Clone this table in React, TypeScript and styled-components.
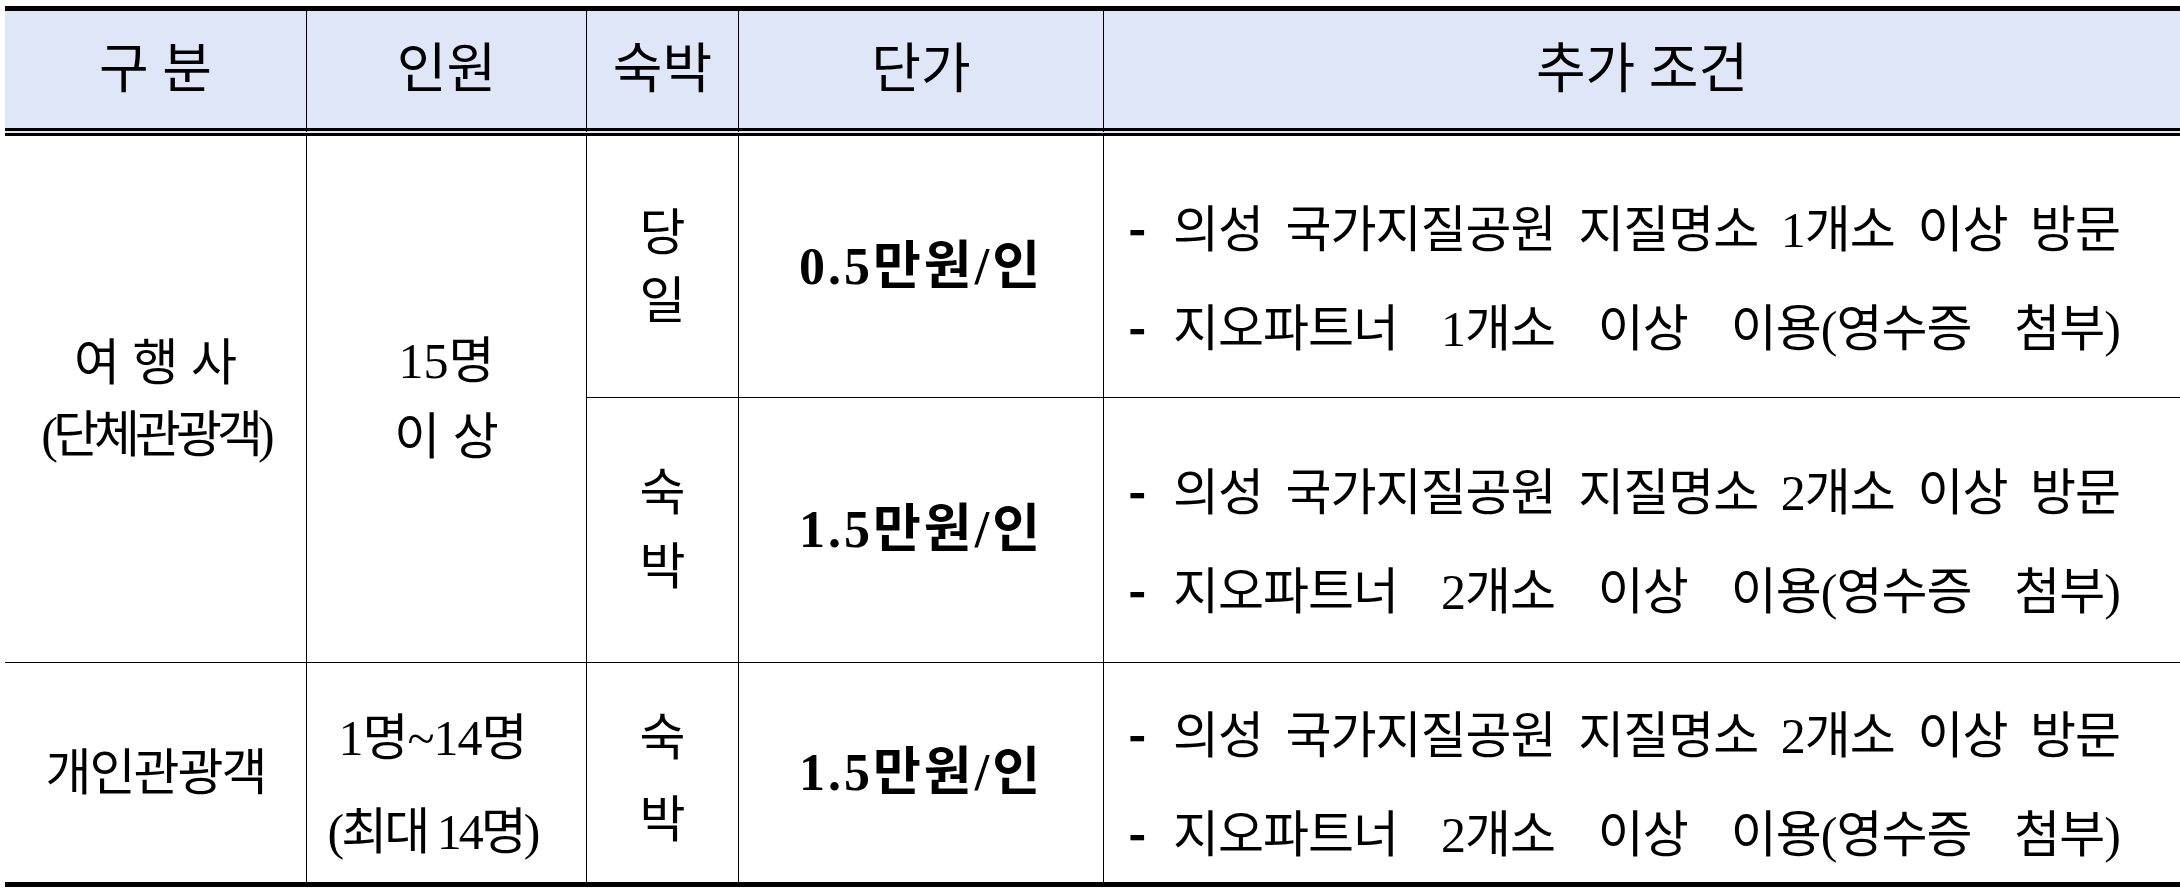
import React from "react";
import styled, { createGlobalStyle } from "styled-components";

const GlobalStyle = createGlobalStyle`
  html, body {
    margin: 0;
    padding: 0;
    background: #ffffff;
  }
  body {
    font-family: "Liberation Serif", "Noto Sans CJK KR", serif;
    color: #000000;
  }
`;

const Table = styled.div`
  display: grid;
  grid-template-columns: 301px 280px 152px 365px 1077px;
  grid-template-rows: 130px 262px 265px 224px;
  width: 2175px;
  margin: 6px 0 0 5px;
`;

const HeadCell = styled.div<{ $first?: boolean }>`
  box-sizing: border-box;
  display: flex;
  align-items: center;
  justify-content: center;
  background: #dfe6f7;
  border-top: 5px solid #000;
  border-bottom: 8px double #000;
  border-left: ${(p) => (p.$first ? "none" : "1px solid #000")};
  font-size: 54px;
  line-height: 1;
  white-space: pre;
`;

const Cell = styled.div<{
  $first?: boolean;
  $last?: boolean;
  $span?: number;
  $lh?: number;
  $padTop?: number;
  $padRight?: number;
}>`
  box-sizing: border-box;
  display: flex;
  flex-direction: column;
  align-items: center;
  justify-content: center;
  grid-row: span ${(p) => p.$span ?? 1};
  border-left: ${(p) => (p.$first ? "none" : "1px solid #000")};
  border-bottom: ${(p) => (p.$last ? "5px solid #000" : "1px solid #000")};
  padding-top: ${(p) => p.$padTop ?? 0}px;
  padding-right: ${(p) => p.$padRight ?? 0}px;
  font-size: 50px;
  line-height: ${(p) => p.$lh ?? 72}px;
  white-space: pre;
`;

const PriceCell = styled(Cell)`
  font-size: 52px;
  font-weight: 700;
  letter-spacing: 3px;
`;

const CondCell = styled(Cell)`
  align-items: flex-start;
  padding-left: 24px;
`;

const CondBlock = styled.div`
  width: 992px;
`;

const CondLine = styled.div`
  display: flex;
  align-items: baseline;
`;

const Dash = styled.span`
  flex: 0 0 45px;
  font-family: "Noto Sans CJK KR", sans-serif;
  font-weight: 700;
`;

const CondText = styled.span`
  flex: 1;
  letter-spacing: -1px;
  text-align: justify;
  text-align-last: justify;
  white-space: normal;
`;

const Line = styled.div<{ $ls?: number }>`
  letter-spacing: ${(p) => p.$ls ?? 0}px;
`;

type Cond = string[];

const cond1: Cond = [
  "의성 국가지질공원 지질명소 1개소 이상 방문",
  "지오파트너 1개소 이상 이용(영수증 첨부)",
];
const cond2: Cond = [
  "의성 국가지질공원 지질명소 2개소 이상 방문",
  "지오파트너 2개소 이상 이용(영수증 첨부)",
];

const Conditions: React.FC<{ lines: Cond; last?: boolean }> = ({ lines, last }) => (
  <CondCell $lh={94} $padTop={20} $last={last}>
    <CondBlock>
      {lines.map((l) => (
        <CondLine key={l}>
          <Dash>-</Dash>
          <CondText>{l}</CondText>
        </CondLine>
      ))}
    </CondBlock>
  </CondCell>
);

export default function App() {
  return (
    <>
      <GlobalStyle />
      <Table>
        <HeadCell $first>구 분</HeadCell>
        <HeadCell>인원</HeadCell>
        <HeadCell>숙박</HeadCell>
        <HeadCell>단가</HeadCell>
        <HeadCell>추가 조건</HeadCell>

        <Cell $first $span={2} $lh={72}>
          <Line>여 행 사</Line>
          <Line $ls={-5}>(단체관광객)</Line>
        </Cell>
        <Cell $span={2} $lh={76}>
          <Line>15명</Line>
          <Line>이 상</Line>
        </Cell>
        <Cell $lh={68}>
          <Line>당</Line>
          <Line>일</Line>
        </Cell>
        <PriceCell>0.5만원/인</PriceCell>
        <Conditions lines={cond1} />

        <Cell $lh={74}>
          <Line>숙</Line>
          <Line>박</Line>
        </Cell>
        <PriceCell>1.5만원/인</PriceCell>
        <Conditions lines={cond2} />

        <Cell $first $last>
          <Line $ls={-2}>개인관광객</Line>
        </Cell>
        <Cell $last $lh={94} $padTop={24} $padRight={28}>
          <Line $ls={-1}>1명~14명</Line>
          <Line $ls={-3}>(최대 14명)</Line>
        </Cell>
        <Cell $last $lh={82} $padTop={12}>
          <Line>숙</Line>
          <Line>박</Line>
        </Cell>
        <PriceCell $last>1.5만원/인</PriceCell>
        <Conditions lines={cond2} last />
      </Table>
    </>
  );
}
